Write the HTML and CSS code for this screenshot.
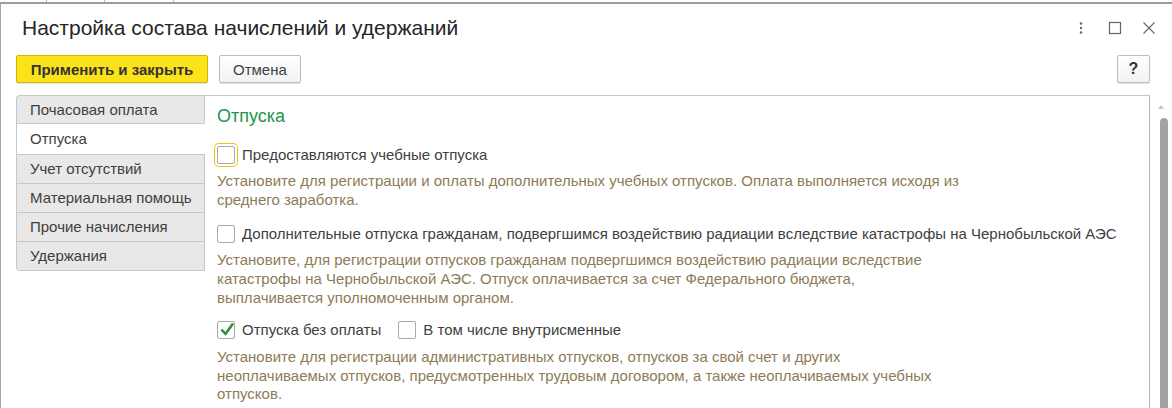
FILE: index.html
```html
<!DOCTYPE html>
<html lang="ru">
<head>
    <meta charset="UTF-8">
    <title>Настройка состава начислений и удержаний</title>
    <link rel="stylesheet" href="styles.css">
</head>
<body>
    <div class="backdrop">
        <span class="tick t1"></span><span class="tick t2"></span><span class="tick t3"></span>
    </div>
    <div class="window">
        <div class="header">
            <h1 class="title">Настройка состава начислений и удержаний</h1>
            <div class="win-icons">
                <svg class="ico" width="14" height="14" viewBox="0 0 14 14"><circle cx="7" cy="2.5" r="1.2" fill="#666"/><circle cx="7" cy="7" r="1.2" fill="#666"/><circle cx="7" cy="11.5" r="1.2" fill="#666"/></svg>
                <svg class="ico" width="14" height="14" viewBox="0 0 14 14"><rect x="1.5" y="1.5" width="11" height="11" fill="none" stroke="#666" stroke-width="1.2"/></svg>
                <svg class="ico" width="14" height="14" viewBox="0 0 14 14"><path d="M1.5 1.5 L12.5 12.5 M12.5 1.5 L1.5 12.5" stroke="#666" stroke-width="1.1"/></svg>
            </div>
        </div>
        <div class="toolbar">
            <button class="btn btn-main">Применить и закрыть</button>
            <button class="btn">Отмена</button>
            <button class="btn btn-help">?</button>
        </div>
        <div class="main">
            <ul class="tabs">
                <li class="tab first">Почасовая оплата</li>
                <li class="tab active">Отпуска</li>
                <li class="tab">Учет отсутствий</li>
                <li class="tab">Материальная помощь</li>
                <li class="tab">Прочие начисления</li>
                <li class="tab last">Удержания</li>
            </ul>
            <div class="panel">
                <h2 class="section">Отпуска</h2>

                <div class="option opt-1">
                    <label class="check"><span class="box focused"></span>Предоставляются учебные отпуска</label>
                </div>
                <p class="hint">Установите для регистрации и оплаты дополнительных учебных отпусков. Оплата выполняется исходя из<br>среднего заработка.</p>

                <div class="option opt-2">
                    <label class="check"><span class="box"></span>Дополнительные отпуска гражданам, подвергшимся воздействию радиации вследствие катастрофы на Чернобыльской АЭС</label>
                </div>
                <p class="hint">Установите, для регистрации отпусков гражданам подвергшимся воздействию радиации вследствие<br>катастрофы на Чернобыльской АЭС. Отпуск оплачивается за счет Федерального бюджета,<br>выплачивается уполномоченным органом.</p>

                <div class="option opt-3">
                    <label class="check"><span class="box checked"><svg width="16" height="16" viewBox="0 0 16 16"><path d="M2.5 8.5 L6.5 13 L14 2.5" fill="none" stroke="#2f8f3a" stroke-width="2.6" stroke-linejoin="round"/></svg></span>Отпуска без оплаты</label>
                    <label class="check"><span class="box"></span>В том числе внутрисменные</label>
                </div>
                <p class="hint hint-wide">Установите для регистрации административных отпусков, отпусков за свой счет и других<br>неоплачиваемых отпусков, предусмотренных трудовым договором, а также неоплачиваемых учебных<br>отпусков.</p>
            </div>
            <div class="scroll">
                <span class="arrow"></span>
                <span class="thumb"></span>
            </div>
        </div>
    </div>
</body>
</html>
```

FILE: styles.css
```css
body {
    margin: 0;
    font-family: "Liberation Sans", Arial, sans-serif;
    color: #333333;
    background: #ffffff;
    overflow: hidden;
}
.backdrop {
    position: relative;
    height: 2px;
    background: #ffffff;
}
.tick {
    position: absolute;
    top: 0;
    width: 1px;
    height: 2px;
    background: #b8b8b8;
}
.t1 { left: 46px; }
.t2 { left: 104px; }
.t3 { left: 173px; }
.window {
    border-top: 2px solid #9b9b9b;
    border-left: 1px solid #a6a6a6;
    height: 404px;
}
.header {
    display: flex;
    align-items: center;
    height: 48px;
    padding-left: 21px;
    padding-right: 16px;
}
.title {
    flex: 1;
    margin: 0;
    font-size: 21px;
    font-weight: normal;
    color: #262626;
}
.win-icons {
    display: flex;
    gap: 20px;
    align-items: center;
}
.ico {
    display: block;
    width: 14px;
    height: 14px;
}
.toolbar {
    display: flex;
    gap: 11px;
    padding: 3px 22px 0 15px;
}
.btn {
    height: 28px;
    padding: 0 13px;
    font-family: "Liberation Sans", Arial, sans-serif;
    font-size: 15px;
    color: #404040;
    background: linear-gradient(#ffffff, #f2f2f2);
    border: 1px solid #bdbdbd;
    border-radius: 2px;
    box-shadow: 0 1px 1px rgba(0, 0, 0, 0.12);
}
.btn-main {
    width: 192px;
    padding: 0;
    font-weight: bold;
    color: #333333;
    background: #fbe219;
    border-color: #d1b800;
}
.btn-help {
    margin-left: auto;
    width: 33px;
    padding: 0;
    font-weight: bold;
    font-size: 16px;
    color: #333333;
}
.main {
    display: flex;
    margin-top: 12px;
}
.tabs {
    list-style: none;
    margin: 0 0 0 15px;
    padding: 0;
    width: 189px;
    flex: none;
}
.tab {
    height: 28px;
    line-height: 28px;
    padding-left: 13px;
    font-size: 15px;
    color: #404040;
    background: #e8e8e8;
    border: 1px solid #c8c8c8;
    border-top: none;
    border-right: none;
    box-shadow: inset -1px 0 0 #c8c8c8;
}
.tab.first {
    height: 27px;
    border-top: 1px solid #c8c8c8;
    border-top-left-radius: 4px;
}
.tab.last {
    border-bottom-left-radius: 4px;
}
.tab.active {
    height: 30px;
    line-height: 30px;
    background: #ffffff;
    box-shadow: none;
}
.panel {
    flex: 1;
    height: 320px;
    padding-left: 12px;
    border-top: 1px solid #c8c8c8;
    border-right: 1px solid #b4b4b4;
    overflow: hidden;
}
.section {
    margin: 10px 0 0;
    font-size: 18px;
    font-weight: normal;
    color: #22964a;
}
.option {
    display: flex;
    gap: 17px;
}
.opt-1 {
    margin-top: 18px;
}
.opt-2 {
    margin-top: 15px;
}
.opt-3 {
    margin-top: 13px;
}
.check {
    display: flex;
    align-items: center;
    gap: 7px;
    font-size: 15px;
    color: #404040;
    line-height: 20px;
}
.box {
    position: relative;
    width: 16px;
    height: 16px;
    border: 1px solid #a9a9a9;
    border-radius: 2px;
    background: #ffffff;
}
.box.focused {
    box-shadow: 0 0 0 2px #ffffff, 0 0 0 3px #f2c40f;
}
.box svg {
    position: absolute;
    left: 1px;
    top: -1px;
}
.hint {
    margin: 6px 0 0;
    font-size: 15px;
    line-height: 19px;
    color: #8e7b57;
}
.hint-wide {
    margin-top: 8px;
    line-height: 18.7px;
}
.scroll {
    position: relative;
    width: 22px;
    flex: none;
}
.arrow {
    position: absolute;
    left: 8px;
    top: 10px;
    border-left: 3px solid transparent;
    border-right: 3px solid transparent;
    border-bottom: 4px solid #c4c4c4;
}
.thumb {
    position: absolute;
    left: 10px;
    top: 23px;
    width: 8px;
    height: 300px;
    border-radius: 4px;
    background: #a3a3a3;
}
```
